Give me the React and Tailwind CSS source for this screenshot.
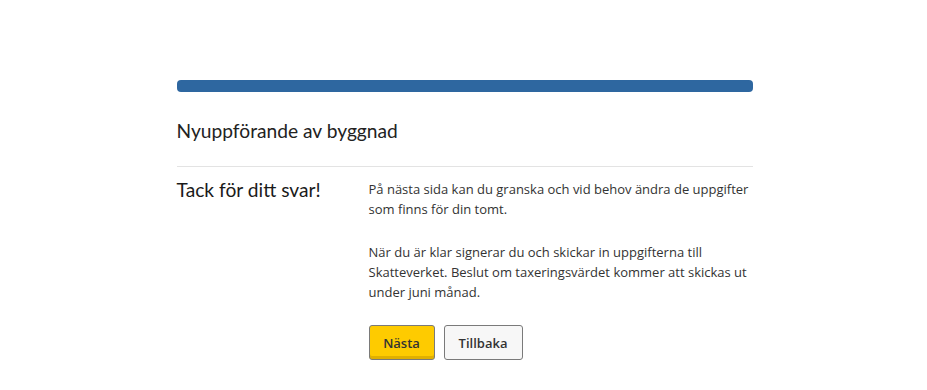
import React from 'react';

const App = () => {
  return (
    <div className="min-h-screen bg-white font-['Open_Sans',sans-serif]">
      <div className="mx-auto w-[576px] translate-x-[1px] pt-[80px]">
        <div className="h-[12px] w-full rounded-[4px] bg-[#2e67a0]" />
        <h1 className="mt-[26px] font-['Lato',sans-serif] text-[19.2px] leading-[26px] text-[#222]">
          Nyuppförande av byggnad
        </h1>
        <div className="mt-[22px] h-px w-full bg-[#e3e3e3]" />
        <div className="mt-[10px] flex">
          <h2 className="w-[192px] shrink-0 font-['Lato',sans-serif] text-[19.2px] leading-[26px] text-[#1a1a1a]">
            Tack för ditt svar!
          </h2>
          <div className="flex-1 pt-[2px] text-[13px] leading-[20px] text-[#333]">
            <p>
              På nästa sida kan du granska och vid behov ändra de uppgifter som finns för din tomt.
            </p>
            <p className="mt-[23px] w-[380px]">
              När du är klar signerar du och skickar in uppgifterna till Skatteverket. Beslut om taxeringsvärdet kommer att skickas ut under juni månad.
            </p>
            <div className="mt-[23px] flex gap-[9px]">
              <button
                type="button"
                className="h-[35px] w-[66px] rounded-[3px] border border-[#7a7a7a] bg-[#fecb00] text-[13px] font-semibold text-[#333] shadow-[inset_0_-3px_0_#e0b000]"
              >
                Nästa
              </button>
              <button
                type="button"
                className="h-[35px] w-[79px] rounded-[3px] border border-[#7a7a7a] bg-[#f7f7f7] text-[13px] font-semibold text-[#333]"
              >
                Tillbaka
              </button>
            </div>
          </div>
        </div>
      </div>
    </div>
  );
};

export default App;
